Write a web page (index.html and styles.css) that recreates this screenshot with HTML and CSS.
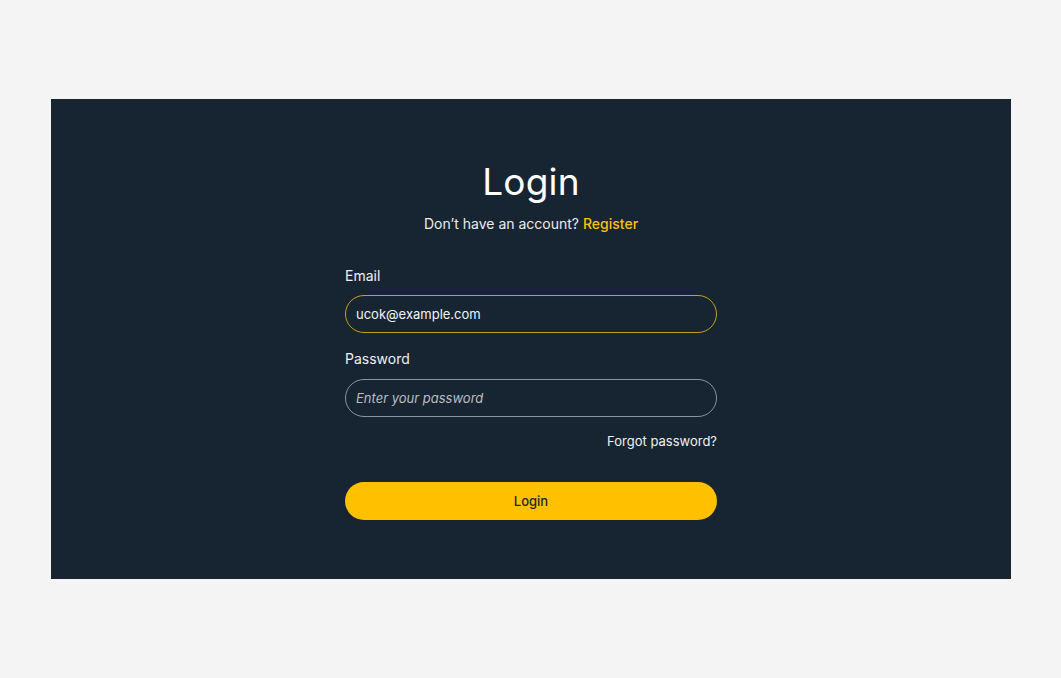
FILE: index.html
```html
<!DOCTYPE html>
<html lang="en">
<head>
<meta charset="utf-8">
<title>Login</title>
<link rel="stylesheet" href="styles.css">
</head>
<body>
<main class="panel">
  <form class="login-form">
    <h1 class="title">Login</h1>
    <p class="subtitle">Don’t have an account? <a class="register" href="#">Register</a></p>
    <label class="label label-email" for="email">Email</label>
    <div class="input input-active" id="email">ucok@example.com</div>
    <label class="label label-password" for="password">Password</label>
    <div class="input input-placeholder" id="password">Enter your password</div>
    <div class="forgot-row"><a class="forgot" href="#">Forgot password?</a></div>
    <button class="btn" type="button">Login</button>
  </form>
</main>
</body>
</html>
```
FILE: styles.css
```css
* { box-sizing: border-box; }
html, body { margin: 0; padding: 0; }
body {
  background: #f4f4f4;
  font-family: "Inter", "Open Sans", sans-serif;
  height: 678px;
  overflow: hidden;
}
.panel {
  margin: 99px 0 0 51px;
  width: 960px;
  height: 480px;
  background: #172533;
  display: flex;
  justify-content: center;
}
.login-form {
  width: 372px;
  display: flex;
  flex-direction: column;
  padding-top: 61px;
}
.title {
  margin: 0;
  text-align: center;
  color: #ffffff;
  font-size: 37px;
  font-weight: 400;
  line-height: 44px;
  letter-spacing: 0.2px;
}
.subtitle {
  margin: 10px 0 0;
  text-align: center;
  color: #e9ecef;
  font-size: 14px;
  line-height: 20px;
}
.register {
  color: #ffc107;
  text-decoration: none;
  font-weight: 500;
}
.label {
  display: block;
  color: #eef0f2;
  font-size: 14px;
  line-height: 20px;
}
.label-email { margin-top: 32px; }
.label-password { margin-top: 16px; }
.input {
  margin-top: 9px;
  height: 38px;
  border-radius: 19px;
  border: 1px solid #8b939c;
  padding: 0 10px;
  display: flex;
  align-items: center;
  font-size: 13px;
  color: #f1f3f5;
}
.label-password + .input { margin-top: 10px; }
.input-active { border-color: #c9a012; }
.input-placeholder {
  font-style: italic;
  color: #b7bec6;
}
.forgot-row {
  margin-top: 15px;
  display: flex;
  justify-content: flex-end;
  line-height: 18px;
}
.forgot {
  color: #eef0f2;
  text-decoration: none;
  font-size: 13px;
}
.btn {
  margin-top: 32px;
  height: 38px;
  border: none;
  border-radius: 19px;
  background: #ffc000;
  color: #1b2733;
  font-family: inherit;
  font-size: 13px;
  font-weight: 500;
  cursor: pointer;
}
```
